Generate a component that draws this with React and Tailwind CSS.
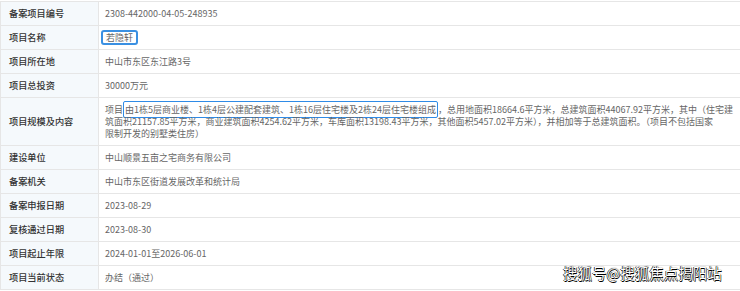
import React from "react";

const rows = [
  { label: "备案项目编号", value: "2308-442000-04-05-248935" },
  { label: "项目名称", value: "若隐轩", boxed: true },
  { label: "项目所在地", value: "中山市东区东江路3号" },
  { label: "项目总投资", value: "30000万元" },
  { label: "项目规模及内容", scale: true },
  { label: "建设单位", value: "中山顺景五亩之宅商务有限公司" },
  { label: "备案机关", value: "中山市东区街道发展改革和统计局" },
  { label: "备案申报日期", value: "2023-08-29" },
  { label: "复核通过日期", value: "2023-08-30" },
  { label: "项目起止年限", value: "2024-01-01至2026-06-01" },
  { label: "项目当前状态", value: "办结（通过）" },
];

const ScaleText = () => (
  <div className="leading-[12px] whitespace-nowrap">
    <div>
      项目
      <span className="border-[1.5px] border-[#2f8be6] rounded-[2px] px-[1px] py-[1px]">
        由1栋5层商业楼、1栋4层公建配套建筑、1栋16层住宅楼及2栋24层住宅楼组成
      </span>
      ，总用地面积18664.6平方米，总建筑面积44067.92平方米，其中（住宅建
    </div>
    <div>筑面积21157.85平方米，商业建筑面积4254.62平方米，车库面积13198.43平方米，其他面积5457.02平方米），并相加等于总建筑面积。（项目不包括国家</div>
    <div>限制开发的别墅类住房）</div>
  </div>
);

export default function App() {
  return (
    <div
      className="relative w-[740px] h-[291px] bg-white pt-[1px]"
      style={{ fontFamily: '"Noto Sans CJK SC", "Noto Sans", sans-serif' }}
    >
      <div className="border-t border-l border-[#e6e6e6] text-[9px]">
        {rows.map((r) => (
          <div key={r.label} className="flex border-b border-[#e6e6e6]">
            <div className="w-[98px] shrink-0 flex items-center pl-[8px] bg-[#f5f9fc] border-r border-[#e6e6e6] text-[#333] text-[9.2px] font-medium">
              {r.label}
            </div>
            <div
              className={`flex-1 flex items-center pl-[6px] text-[#666] ${
                r.scale ? "h-[47px]" : "h-[23px]"
              }`}
            >
              {r.scale ? (
                <ScaleText />
              ) : r.boxed ? (
                <span className="-ml-[4px] border-2 border-[#3a90e2] rounded-[3px] px-[3px] leading-[11px]">
                  {r.value}
                </span>
              ) : (
                r.value
              )}
            </div>
          </div>
        ))}
      </div>
      <div className="absolute left-[563px] top-[262px] text-[14.5px] text-white [text-shadow:0_0_1px_#000,0.5px_0.5px_0.5px_#000,-0.5px_-0.5px_0.5px_#000]">
        搜狐号@搜狐焦点揭阳站
      </div>
    </div>
  );
}
